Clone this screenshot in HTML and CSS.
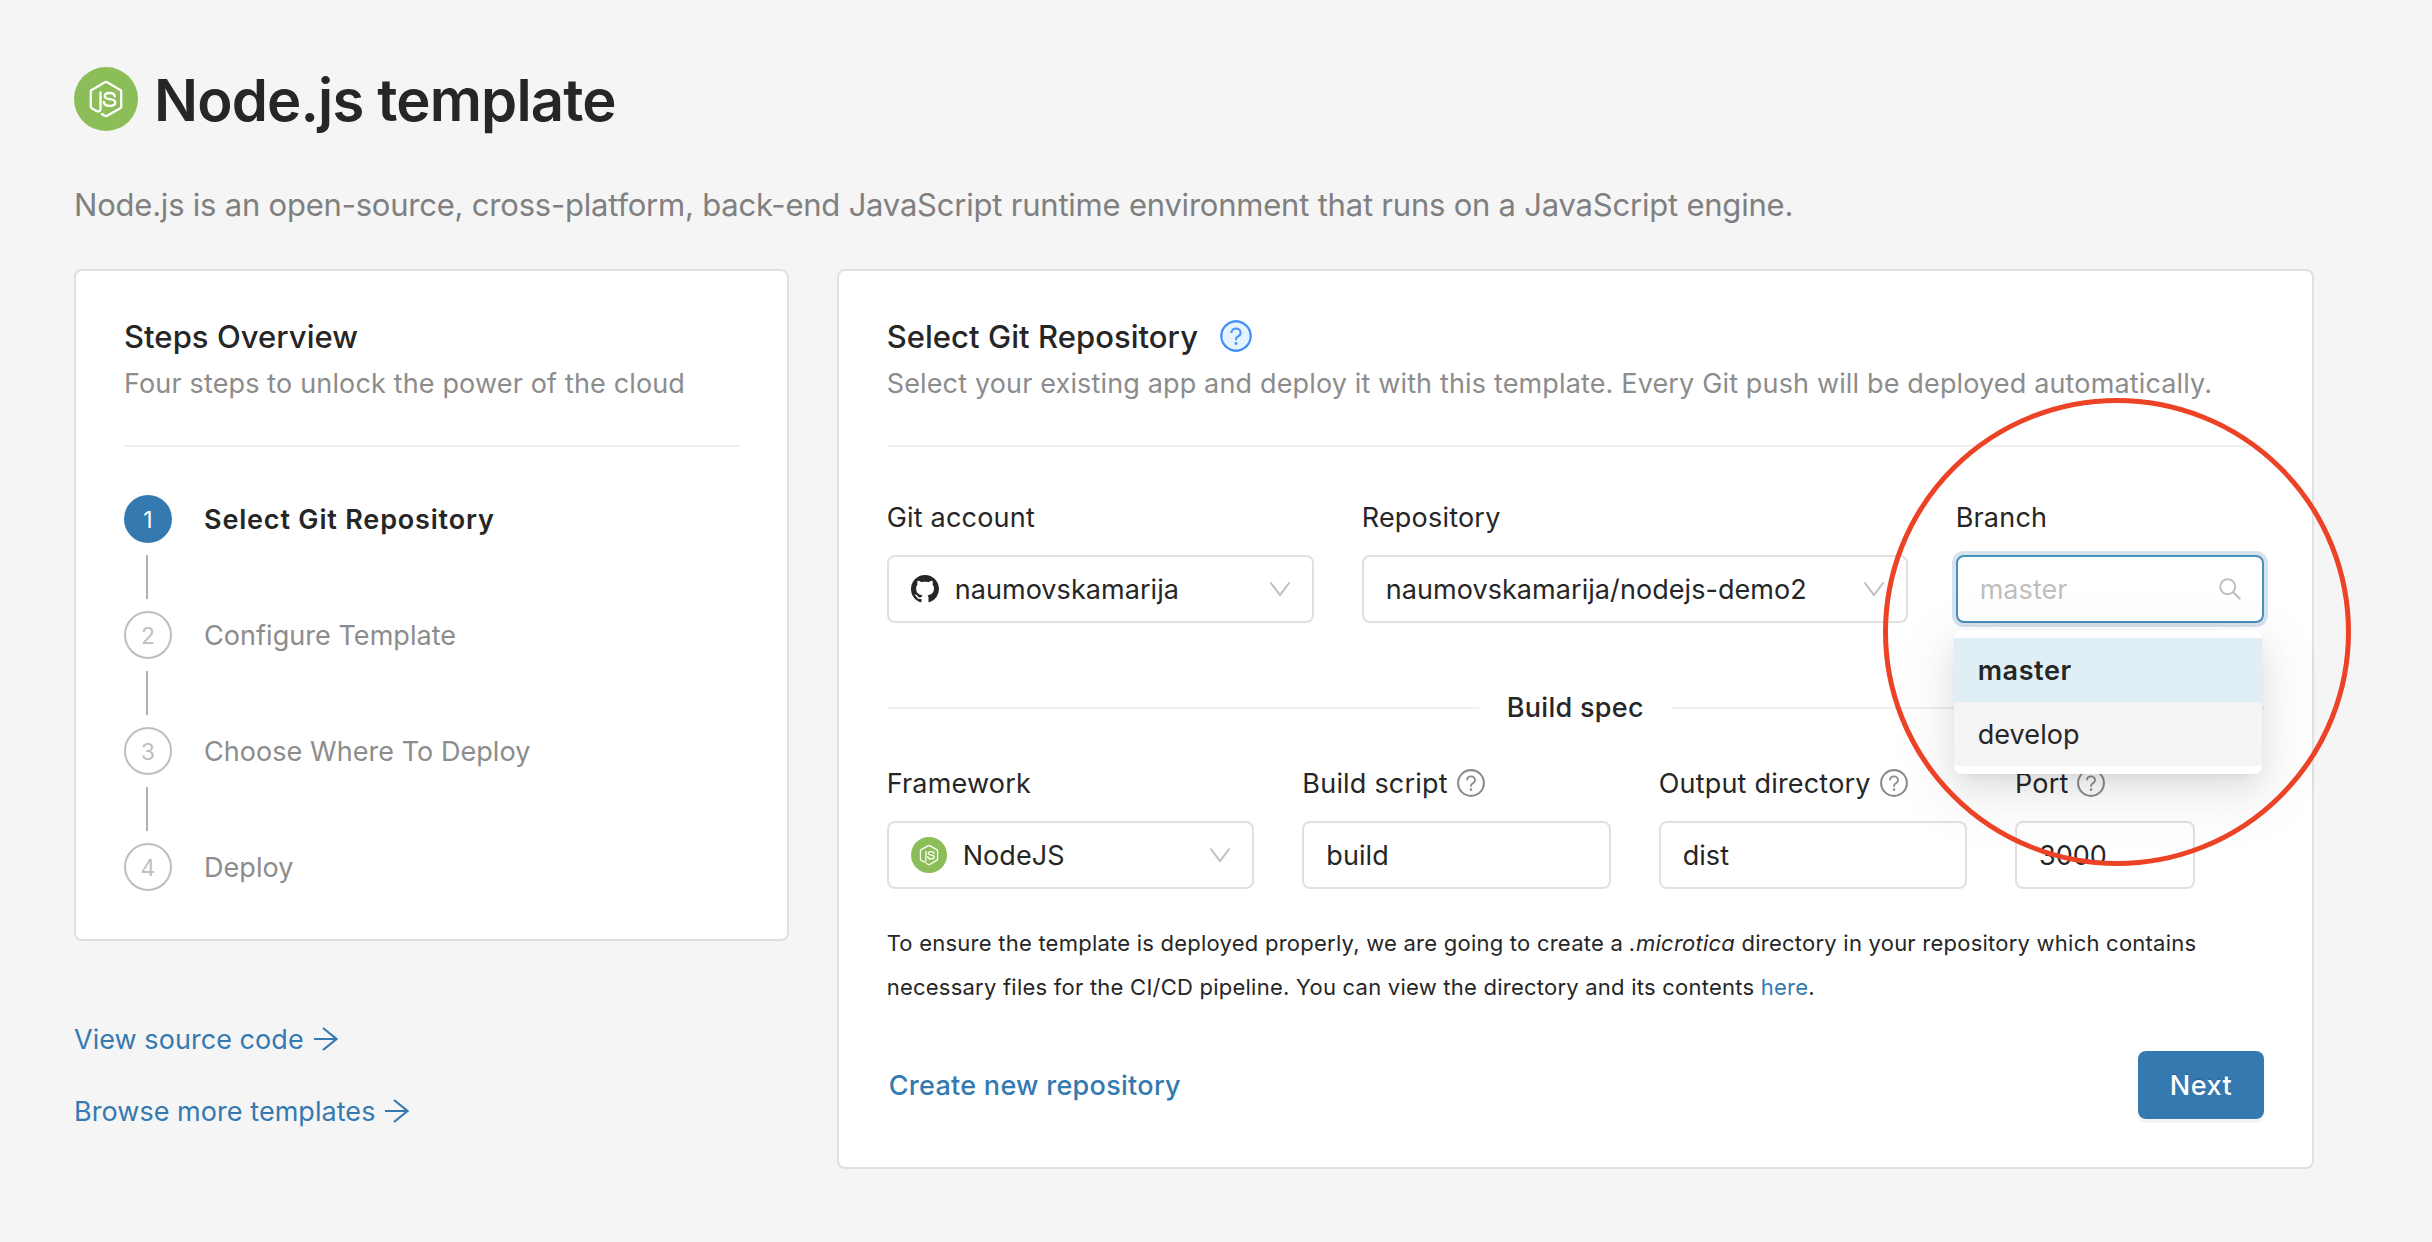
FILE: index.html
```html
<!DOCTYPE html>
<html lang="en">
<head>
<meta charset="utf-8">
<title>Node.js template</title>
<link rel="stylesheet" href="styles.css">
</head>
<body>
<!-- shared icons -->
<svg width="0" height="0" class="sprite">
  <symbol id="node" viewBox="0 0 64 64">
    <circle cx="32" cy="32" r="32" fill="#8bbd59"/>
    <g fill="none" stroke="#fff" stroke-width="2.3" stroke-linecap="round" stroke-linejoin="round">
      <path d="M26.500 25.500v16.200c0 2.600-2 3.300-4 2.300l-4.800-2.800a1.800 1.800 0 0 1-.9-1.600V24.400c0-.7.3-1.200.9-1.500l13.200-7.600a2.200 2.200 0 0 1 2.200 0l13.200 7.600c.6.300.9.800.9 1.500v15.200c0 .7-.3 1.200-.9 1.600l-13.200 7.600a2.200 2.200 0 0 1-2.200 0l-3-1.700"/>
      <path d="M40.800 29.300c-.3-2.300-2-3.300-5-3.300-3.300 0-5.100 1.200-5.100 3.100 0 2.400 2.300 2.800 5.100 3.100 3.200.3 5.400.8 5.400 3.300 0 2.300-2 3.400-5.500 3.400-3.700 0-5.700-1.300-5.900-4"/>
    </g>
  </symbol>
  <symbol id="github" viewBox="0 0 16 16">
    <path fill="#262626" d="M8 0C3.580 0 0 3.580 0 8c0 3.540 2.290 6.530 5.470 7.590.4.070.55-.17.55-.38 0-.19-.01-.82-.01-1.490-2.010.37-2.530-.49-2.690-.94-.09-.23-.48-.94-.82-1.130-.28-.15-.68-.52-.01-.53.63-.01 1.080.58 1.230.82.72 1.210 1.870.87 2.330.66.07-.52.28-.87.51-1.070-1.780-.2-3.640-.89-3.640-3.950 0-.87.31-1.590.82-2.150-.08-.2-.36-1.020.08-2.120 0 0 .67-.21 2.200.82.64-.18 1.320-.27 2-.27s1.360.09 2 .27c1.530-1.040 2.200-.82 2.200-.82.44 1.100.16 1.920.08 2.120.51.56.82 1.270.82 2.150 0 3.070-1.870 3.750-3.650 3.950.29.25.54.73.54 1.480 0 1.070-.01 1.930-.01 2.200 0 .21.15.46.55.38A8.010 8.010 0 0 0 16 8c0-4.420-3.580-8-8-8z"/>
  </symbol>
  <symbol id="down" viewBox="0 0 22 16">
    <path d="M1.500 1.500 11 14l9.500-12.500" fill="none" stroke="#bfbfbf" stroke-width="2"/>
  </symbol>
  <symbol id="arrow" viewBox="0 0 24 24">
    <path d="M0 12h22.500M9 1l13.500 11L9 23" fill="none" stroke="#3579b1" stroke-width="2.200"/>
  </symbol>
  <symbol id="help" viewBox="0 0 28 28">
    <circle cx="14" cy="14" r="12.900" fill="none" stroke="currentColor" stroke-width="2.100"/>
    <path d="M10 11.300c0-2.300 1.700-3.900 4-3.900s4 1.600 4 3.700c0 1.700-1 2.800-2.500 3.500-1 .5-1.500 1-1.500 2.100v1.100" fill="none" stroke="currentColor" stroke-width="1.800"/>
    <circle cx="14" cy="20.600" r="1.300" fill="currentColor"/>
  </symbol>
</svg>

<div class="page">
  <header class="header">
    <svg class="logo"><use href="#node"/></svg>
    <h1>Node.js template</h1>
  </header>
  <p class="description">Node.js is an open-source, cross-platform, back-end JavaScript runtime environment that runs on a JavaScript engine.</p>

  <div class="columns">
    <aside>
      <div class="card">
        <h2>Steps Overview</h2>
        <p class="subtitle">Four steps to unlock the power of the cloud</p>
        <hr>
        <ol class="steps">
          <li class="active"><span class="num">1</span>Select Git Repository</li>
          <li><span class="num">2</span>Configure Template</li>
          <li><span class="num">3</span>Choose Where To Deploy</li>
          <li><span class="num">4</span>Deploy</li>
        </ol>
      </div>
      <div class="links">
        <a href="#">View source code<svg class="arrow"><use href="#arrow"/></svg></a>
        <a href="#">Browse more templates<svg class="arrow"><use href="#arrow"/></svg></a>
      </div>
    </aside>

    <main class="card">
      <h2>Select Git Repository
        <svg class="help-blue"><use href="#help"/></svg>
      </h2>
      <p class="subtitle">Select your existing app and deploy it with this template. Every Git push will be deployed automatically.</p>
      <hr>

      <div class="row">
        <div class="field account">
          <label>Git account</label>
          <div class="box"><svg class="github"><use href="#github"/></svg>naumovskamarija<svg class="down"><use href="#down"/></svg></div>
        </div>
        <div class="field repo">
          <label>Repository</label>
          <div class="box">naumovskamarija/nodejs-demo2<svg class="down"><use href="#down"/></svg></div>
        </div>
        <div class="field branch">
          <label>Branch</label>
          <div class="box focused">master
            <svg class="search" viewBox="0 0 22 22"><g fill="none" stroke="#bfbfbf" stroke-width="2"><circle cx="8.700" cy="8.700" r="7.500"/><path d="M14 14l7.300 7.300"/></g></svg>
          </div>
          <ul class="dropdown">
            <li class="selected">master</li>
            <li>develop</li>
          </ul>
          <div class="marker"></div>
        </div>
      </div>

      <div class="divider">Build spec</div>

      <div class="row spec">
        <div class="field framework">
          <label>Framework</label>
          <div class="box"><svg class="node"><use href="#node"/></svg>NodeJS<svg class="down"><use href="#down"/></svg></div>
        </div>
        <div class="field script">
          <label>Build script<svg class="help"><use href="#help"/></svg></label>
          <div class="box">build</div>
        </div>
        <div class="field output">
          <label>Output directory<svg class="help"><use href="#help"/></svg></label>
          <div class="box">dist</div>
        </div>
        <div class="field port">
          <label>Port<svg class="help"><use href="#help"/></svg></label>
          <div class="box">3000</div>
        </div>
      </div>

      <p class="note">To ensure the template is deployed properly, we are going to create a <i>.microtica</i> directory in your repository which contains<br>necessary files for the CI/CD pipeline. You can view the directory and its contents <a href="#">here</a>.</p>

      <div class="footer">
        <a href="#">Create new repository</a>
        <button type="button">Next</button>
      </div>
    </main>
  </div>
</div>
</body>
</html>
```
FILE: styles.css
```css
* {
  box-sizing: border-box;
}

body {
  margin: 0;
  background: #f5f5f5;
  color: #262626;
  font-family: Inter, "Liberation Sans", sans-serif;
  font-size: 27px;
  letter-spacing: 0.1px;
  line-height: 44px;
}

h1, h2, p, ol, ul {
  margin: 0;
  padding: 0;
  list-style: none;
}

a {
  color: #3579b1;
  text-decoration: none;
}

svg {
  display: block;
  flex: none;
}

.sprite {
  position: absolute;
}

.page {
  width: 2240px;
  margin-left: 74px;
  padding-top: 64px;
}

.header {
  display: flex;
  align-items: center;
  height: 72px;
}

.logo {
  width: 64px;
  height: 64px;
  margin-top: -2px;
}

h1 {
  margin-left: 16px;
  font-size: 58px;
  font-weight: 600;
  line-height: 72px;
  letter-spacing: -0.85px;
}

.description {
  margin: 47px 0 41px;
  height: 45px;
  color: #808080;
  font-size: 31px;
  letter-spacing: -0.215px;
}

.columns {
  display: grid;
  grid-template-columns: 714.67px 1fr;
  gap: 48px;
  align-items: start;
}

.card {
  background: #fff;
  border: 2px solid #e0e0e0;
  border-radius: 8px;
  padding: 48px;
}

h2 {
  display: flex;
  align-items: center;
  height: 36px;
  font-size: 31px;
  font-weight: 500;
  letter-spacing: 0.05px;
}

.subtitle {
  height: 44px;
  margin-top: 7px;
  color: #8c8c8c;
  letter-spacing: 0.15px;
}

hr {
  margin: 39px 0 0;
  border: none;
  border-top: 2px solid #f0f0f0;
}

/* steps */
.steps li {
  position: relative;
  display: flex;
  align-items: center;
  height: 48px;
  margin-top: 68px;
  padding-top: 2px;
  color: #8c8c8c;
  letter-spacing: 0.05px;
}

.steps li:first-child {
  margin-top: 48px;
}

.steps li + li::before {
  content: "";
  position: absolute;
  left: 22px;
  top: -56px;
  width: 2px;
  height: 44px;
  background: #b0b0b0;
}

.num {
  width: 48px;
  height: 48px;
  margin: -2px 32px 0 0;
  border: 2px solid #bfbfbf;
  border-radius: 50%;
  color: #bfbfbf;
  font-size: 23px;
  line-height: 46px;
  text-align: center;
}

.steps .active {
  color: #262626;
  font-weight: 600;
  letter-spacing: 0.82px;
}

.active .num {
  background: #3579b1;
  border-color: #3579b1;
  color: #fff;
  font-weight: 400;
  letter-spacing: 0;
}

.links {
  margin-top: 77px;
}

.links a {
  display: flex;
  align-items: center;
  height: 44px;
  margin-bottom: 28px;
  letter-spacing: 0.05px;
}

.arrow {
  width: 24px;
  height: 24px;
  margin: -2px 0 0 10px;
}

/* form */
.row {
  display: flex;
  gap: 48px;
  margin-top: 48px;
}

.field {
  position: relative;
}

.account { width: 427.1px; }
.repo { width: 545.9px; }
.branch, .script, .output { width: 308.3px; }
.framework { width: 367.7px; }
.port { width: 180px; }

label {
  display: flex;
  align-items: center;
  height: 44px;
  padding-top: 2px;
  letter-spacing: 0.2px;
}

.box {
  display: flex;
  align-items: center;
  height: 68px;
  margin-top: 16px;
  padding: 2px 21px 0 22px;
  border: 2px solid #e0e0e0;
  border-radius: 8px;
  background: #fff;
  letter-spacing: 0.06px;
}

.box svg,
label svg {
  margin-top: -2px;
}

.focused {
  border-color: #4a90be;
  box-shadow: 0 0 0 4px #d6e2ee;
  color: #bfbfbf;
}

.down {
  width: 22px;
  height: 16px;
  margin-left: auto;
}

.search {
  width: 22px;
  height: 22px;
  margin-left: auto;
}

.github {
  width: 28px;
  height: 28px;
  margin-right: 16px;
}

.node {
  width: 36px;
  height: 36px;
  margin-right: 16px;
}

.help {
  width: 28px;
  height: 28px;
  margin-left: 9px;
  color: #8c8c8c;
}

.help-blue {
  width: 32px;
  height: 32px;
  margin: -2px 0 0 22px;
  border-radius: 50%;
  background: #e6f4ff;
  color: #4390fa;
}

.dropdown {
  position: absolute;
  z-index: 1;
  top: 135px;
  left: -2px;
  width: 308px;
  padding: 8px 0;
  border-radius: 8px;
  background: #fff;
  box-shadow: 0 6px 12px -8px rgba(0, 0, 0, 0.12), 0 12px 32px rgba(0, 0, 0, 0.08), 0 18px 56px 16px rgba(0, 0, 0, 0.05);
}

.dropdown li {
  height: 64px;
  padding: 0 24px;
  background: #f4f4f4;
  line-height: 66px;
}

.dropdown .selected {
  background: #e0eff5;
  font-weight: 600;
  letter-spacing: 0.6px;
}

/* red highlight ring around the branch select */
.marker {
  position: absolute;
  z-index: 2;
  top: -97px;
  left: -73px;
  width: 468px;
  height: 468px;
  border: 5px solid #ec4226;
  border-radius: 50%;
}

.divider {
  display: flex;
  align-items: center;
  gap: 28px;
  height: 44px;
  margin-top: 63px;
  font-weight: 500;
  letter-spacing: 0.3px;
}

.divider::before,
.divider::after {
  content: "";
  flex: 1;
  height: 2px;
  background: #f0f0f0;
}

.spec {
  margin-top: 31px;
}

.note {
  margin-top: 32px;
  font-size: 22px;
  letter-spacing: 0.235px;
}

.footer {
  display: flex;
  align-items: center;
  justify-content: space-between;
  margin-top: 42px;
  padding-left: 2px;
  font-weight: 500;
  letter-spacing: 0.29px;
}

.footer a {
  padding-top: 2px;
}

button {
  width: 126px;
  height: 68px;
  padding: 2px 0 0;
  border: none;
  border-radius: 8px;
  background: #3579b1;
  box-shadow: 0 4px 0 rgba(0, 0, 0, 0.045);
  color: #fff;
  font: inherit;
  letter-spacing: 0.5px;
  text-shadow: 0 -2px 0 rgba(0, 0, 0, 0.12);
}
```
